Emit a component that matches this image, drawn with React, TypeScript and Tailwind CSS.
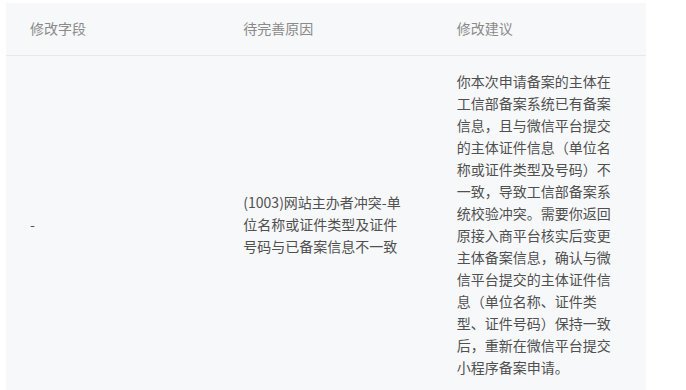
import React from "react";

const font = { fontFamily: '"Noto Sans CJK SC", "Noto Sans", sans-serif' };

export default function App() {
  return (
    <div className="min-h-[390px] bg-white pl-[6px] pt-[3px]" style={font}>
      <div className="w-[640px] bg-[#f7f8fa] text-[14px] leading-[22px]">
        <div className="grid grid-cols-3 border-b border-[#e7e8eb] text-[#8a8a8a]">
          <div className="px-6 pb-[16px] pt-[14px]">修改字段</div>
          <div className="px-6 pb-[16px] pt-[14px]">待完善原因</div>
          <div className="px-6 pb-[16px] pt-[14px]">修改建议</div>
        </div>
        <div className="grid grid-cols-3 items-center text-[#505050]">
          <div className="px-6 pb-[18px] pt-[14px]">-</div>
          <div className="px-6 pb-[18px] pt-[14px]">(1003)网站主办者冲突-单位名称或证件类型及证件号码与已备案信息不一致</div>
          <div className="px-6 pb-[18px] pt-[14px]">
            你本次申请备案的主体在工信部备案系统已有备案信息，且与微信平台提交的主体证件信息（单位名称或证件类型及号码）不一致，导致工信部备案系统校验冲突。需要你返回原接入商平台核实后变更主体备案信息，确认与微信平台提交的主体证件信息（单位名称、证件类型、证件号码）保持一致后，重新在微信平台提交小程序备案申请。
          </div>
        </div>
      </div>
    </div>
  );
}
